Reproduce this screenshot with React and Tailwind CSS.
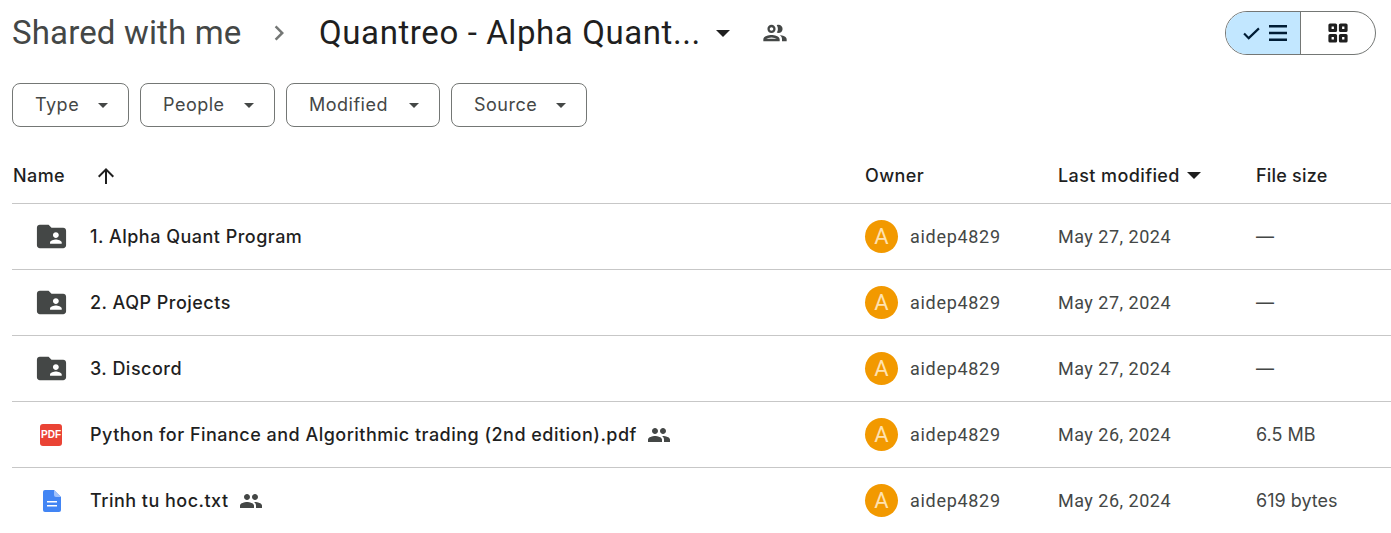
import React from 'react';

const files = [
  { name: '1. Alpha Quant Program', kind: 'folder', date: 'May 27, 2024', size: '—' },
  { name: '2. AQP Projects', kind: 'folder', date: 'May 27, 2024', size: '—' },
  { name: '3. Discord', kind: 'folder', date: 'May 27, 2024', size: '—' },
  { name: 'Python for Finance and Algorithmic trading (2nd edition).pdf', kind: 'pdf', shared: true, date: 'May 26, 2024', size: '6.5 MB' },
  { name: 'Trinh tu hoc.txt', kind: 'doc', shared: true, date: 'May 26, 2024', size: '619 bytes' },
];

const Caret = ({ className }) => (
  <svg viewBox="0 0 10 5" className={className} fill="currentColor">
    <path d="M0 0h10L5 5z" />
  </svg>
);

const FileIcon = ({ kind }) => {
  if (kind === 'folder') {
    return (
      <svg viewBox="0 0 24 24" className="w-[35px] h-[35px] ml-[1px] text-[#444746]" fill="currentColor">
        <path d="M20 6h-8l-2-2H4c-1.1 0-2 .9-2 2v12c0 1.1.9 2 2 2h16c1.1 0 2-.9 2-2V8c0-1.1-.9-2-2-2zm-5 3c1.1 0 2 .9 2 2s-.9 2-2 2-2-.9-2-2 .9-2 2-2zm4 8h-8v-1c0-1.33 2.67-2 4-2s4 .67 4 2v1z" />
      </svg>
    );
  }
  if (kind === 'pdf') {
    return (
      <div className="w-[22px] h-[22px] rounded-[3px] bg-[#ea4335] text-white flex items-center justify-center text-[10px] font-bold font-['Liberation_Sans',sans-serif] leading-none">
        PDF
      </div>
    );
  }
  return (
    <svg viewBox="0 0 18 22" className="w-[18px] h-[22px] ml-[2px]">
      <path d="M2 0h9l7 7v13a2 2 0 0 1-2 2H2a2 2 0 0 1-2-2V2a2 2 0 0 1 2-2z" fill="#4285f4" />
      <path d="M11 0l7 7h-5a2 2 0 0 1-2-2z" fill="#a1c2fa" />
      <path d="M4 11h10v1.6H4zM4 15h10v1.6H4z" fill="#fff" />
    </svg>
  );
};

const SharedIcon = () => (
  <svg viewBox="0 0 24 24" className="w-6 h-6 text-[#444746] ml-[10px]" fill="currentColor">
    <path d="M16 11c1.66 0 2.99-1.34 2.99-3S17.66 5 16 5c-1.66 0-3 1.34-3 3s1.34 3 3 3zm-8 0c1.66 0 2.99-1.34 2.99-3S9.66 5 8 5C6.34 5 5 6.34 5 8s1.34 3 3 3zm0 2c-2.33 0-7 1.17-7 3.5V19h14v-2.5c0-2.33-4.67-3.5-7-3.5zm8 0c-.29 0-.62.02-.97.05 1.16.84 1.97 1.97 1.97 3.45V19h6v-2.5c0-2.33-4.67-3.5-7-3.5z" />
  </svg>
);

const App = () => {
  return (
    <div className="w-[1391px] h-[533px] bg-white overflow-hidden pl-3 font-['Roboto','Liberation_Sans',sans-serif]">
      {/* Breadcrumb row with the view toggle */}
      <div className="h-[66px] flex items-center pr-[15px]">
        <span className="text-[33px] tracking-[0.15px] text-[#444746] w-[229px] whitespace-nowrap">Shared with me</span>
        <svg viewBox="0 0 24 24" className="w-[30px] h-[30px] ml-[23px] text-[#747775]" fill="currentColor">
          <path d="M8.59 16.59 13.17 12 8.59 7.41 10 6l6 6-6 6z" />
        </svg>
        <span className="text-[33px] tracking-[0.6px] text-[#1f1f1f] w-[380px] ml-[25px] whitespace-nowrap">Quantreo - Alpha Quant...</span>
        <Caret className="w-[14px] h-[7px] ml-[17px] text-[#1f1f1f]" />
        <svg viewBox="0 0 24 24" className="w-[28px] h-[28px] ml-[31px] text-[#444746]" fill="currentColor">
          <path d="M9 13.75c-2.34 0-7 1.17-7 3.5V19h14v-1.75c0-2.33-4.66-3.5-7-3.5zM4.34 17c.84-.58 2.87-1.25 4.66-1.25s3.82.67 4.66 1.25H4.34zM9 12c1.93 0 3.5-1.57 3.5-3.5S10.93 5 9 5 5.5 6.57 5.5 8.5 7.07 12 9 12zm0-5c.83 0 1.5.67 1.5 1.5S9.83 10 9 10s-1.5-.67-1.5-1.5S8.17 7 9 7zm7.04 6.81c1.16.84 1.96 1.96 1.96 3.44V19h4v-1.75c0-2.02-3.5-3.17-5.96-3.44zM15 12c1.93 0 3.5-1.57 3.5-3.5S16.93 5 15 5c-.54 0-1.04.13-1.5.35.63.89 1 1.98 1 3.15s-.37 2.26-1 3.15c.46.22.96.35 1.5.35z" />
        </svg>

        <div className="ml-auto flex h-11 w-[151px] rounded-full border border-[#747775] overflow-hidden">
          <div className="w-[75px] bg-[#c2e7ff] border-r border-[#747775] flex items-center justify-center gap-[9px] pl-[3px] text-[#001d35]">
            <svg viewBox="0 0 18 14" className="w-[17px] h-[13px]" fill="none" stroke="currentColor" strokeWidth="2.3">
              <path d="M1 7l5 5L17 1.5" />
            </svg>
            <svg viewBox="0 0 18 16" className="w-[18px] h-4" fill="currentColor">
              <path d="M0 0h18v2.6H0zM0 6.7h18v2.6H0zM0 13.4h18V16H0z" />
            </svg>
          </div>
          <div className="flex-1 flex items-center justify-center text-[#1f1f1f]">
            <svg viewBox="0 0 20 20" className="w-5 h-5" fill="none" stroke="currentColor" strokeWidth="3.2" strokeLinejoin="round">
              <path d="M2 2h5.5v5.5H2zM12.5 2H18v5.5h-5.5zM2 12.5h5.5V18H2zM12.5 12.5H18V18h-5.5z" />
            </svg>
          </div>
        </div>
      </div>

      {/* Filter chips */}
      <div className="flex gap-[11px] mt-[17px] font-['Inter',sans-serif]">
        {[['Type', 'w-[117px]'], ['People', 'w-[135px]'], ['Modified', 'w-[154px]'], ['Source', 'w-[136px]']].map(([label, width]) => (
          <div key={label} className={`${width} h-11 rounded-lg border border-[#747775] flex items-center justify-between pl-[22px] pr-5 text-[18px] tracking-[0.5px] text-[#444746]`}>
            <span className="-mt-[2px]">{label}</span>
            <Caret className="w-[10px] h-[5px]" />
          </div>
        ))}
      </div>

      {/* Column headers */}
      <div className="h-[77px] flex items-end pb-px border-b border-[#c7c7c7] text-[18px] font-medium tracking-[0.4px] text-[#1f1f1f] font-['Inter',sans-serif]">
        <div className="w-[853px] h-[53px] flex items-center pl-px">
          Name
          <svg viewBox="0 0 24 24" className="w-6 h-6 ml-[29px]" fill="currentColor">
            <path d="M4 12l1.41 1.41L11 7.83V20h2V7.83l5.58 5.59L20 12l-8-8-8 8z" />
          </svg>
        </div>
        <div className="w-[193px] h-[53px] flex items-center">Owner</div>
        <div className="w-[198px] h-[53px] flex items-center">
          Last modified
          <Caret className="w-[14px] h-[7px] ml-[7px]" />
        </div>
        <div className="h-[53px] flex items-center tracking-[0.2px]">File size</div>
      </div>

      {/* File rows */}
      {files.map((file) => (
        <div key={file.name} className="h-[66px] flex items-center border-b border-[#c7c7c7] last:border-transparent">
          <div className="w-[853px] flex items-center">
            <div className="w-[78px] flex justify-center">
              <FileIcon kind={file.kind} />
            </div>
            <span className="text-[18px] font-medium tracking-[0.48px] text-[#1f1f1f] whitespace-nowrap font-['Inter',sans-serif]">{file.name}</span>
            {file.shared && <SharedIcon />}
          </div>
          <div className="w-[193px] flex items-center">
            <div className="w-[33px] h-[33px] rounded-full bg-[#f29900] text-[#ffe2b0] text-[22px] flex items-center justify-center">A</div>
            <span className="ml-[12px] text-[18px] tracking-[0.7px] text-[#444746]">aidep4829</span>
          </div>
          <div className="w-[198px] text-[18px] tracking-[0.5px] text-[#444746]">{file.date}</div>
          <div className="text-[18px] text-[#444746] font-['Inter',sans-serif]">{file.size}</div>
        </div>
      ))}
    </div>
  );
};

export default App;
